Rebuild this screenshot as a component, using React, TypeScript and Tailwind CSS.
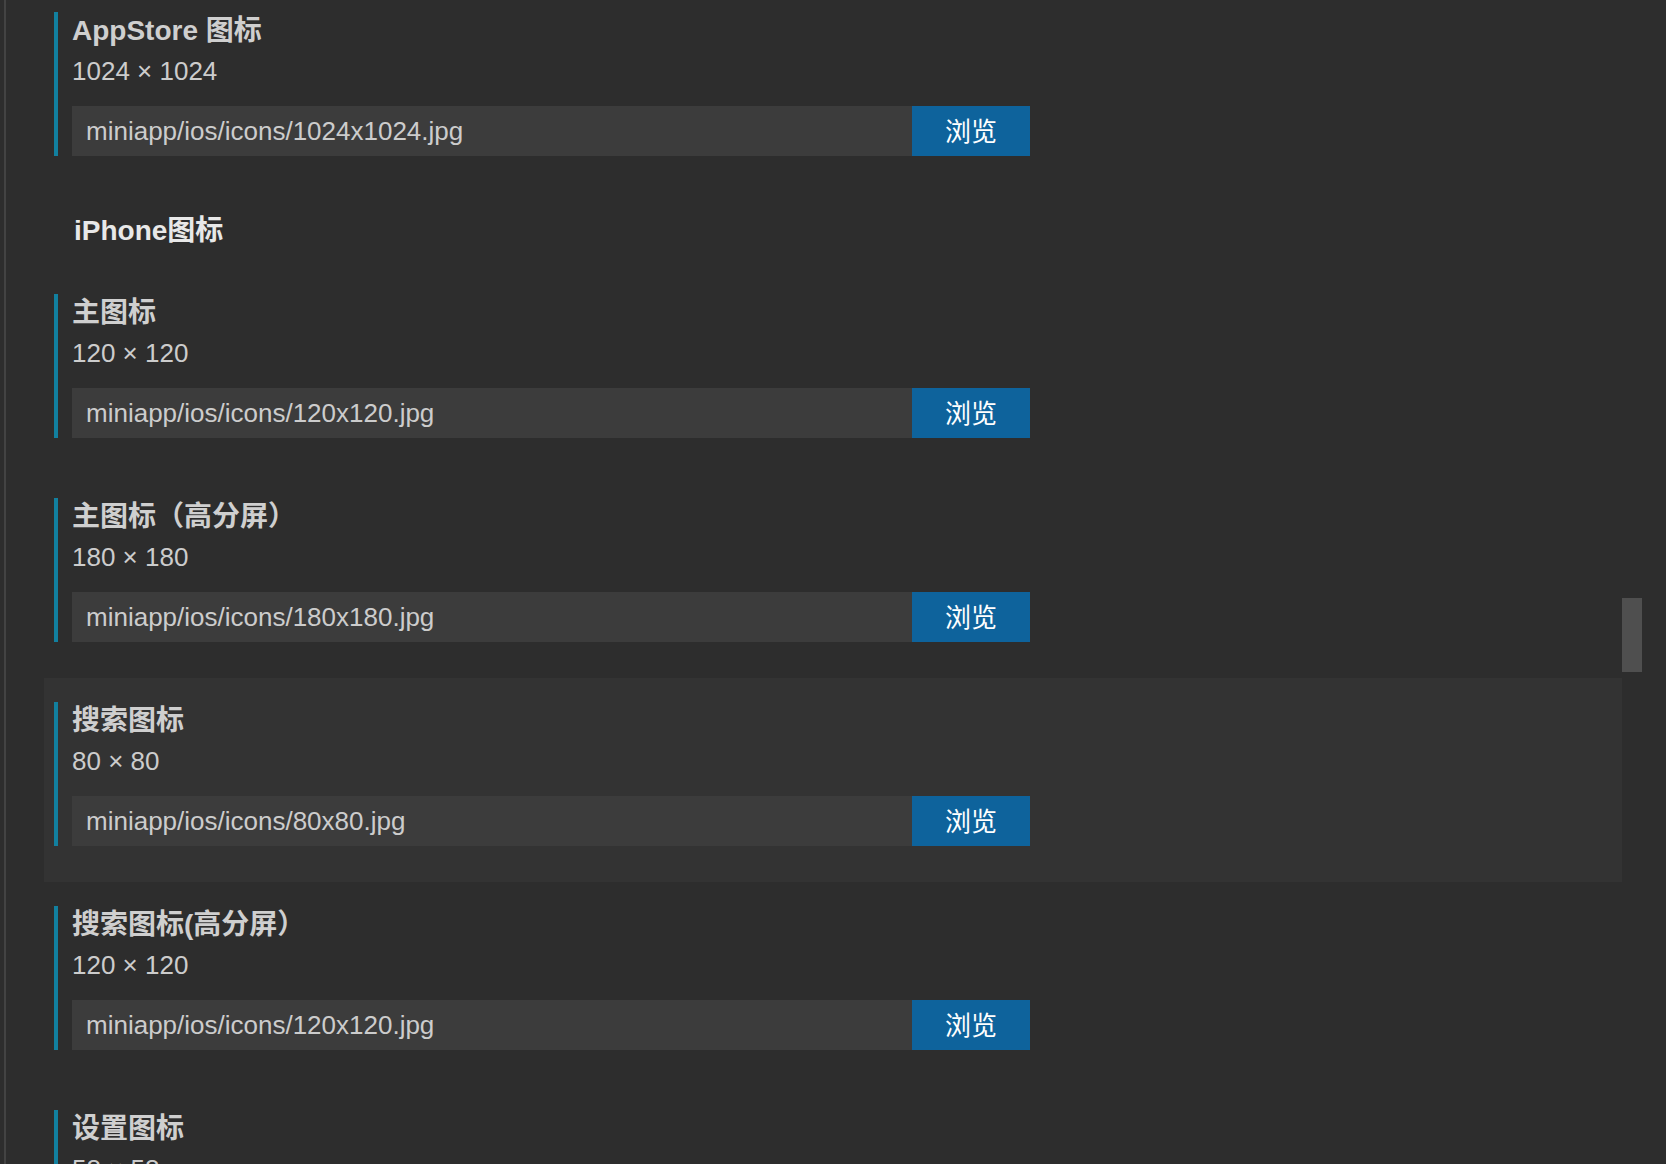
import React from "react";

type Item = { title: string; size: string; path: string; hover?: boolean };

const items1: Item[] = [
  { title: "AppStore 图标", size: "1024 × 1024", path: "miniapp/ios/icons/1024x1024.jpg" },
];

const items2: Item[] = [
  { title: "主图标", size: "120 × 120", path: "miniapp/ios/icons/120x120.jpg" },
  { title: "主图标（高分屏）", size: "180 × 180", path: "miniapp/ios/icons/180x180.jpg" },
  { title: "搜索图标", size: "80 × 80", path: "miniapp/ios/icons/80x80.jpg", hover: true },
  { title: "搜索图标(高分屏）", size: "120 × 120", path: "miniapp/ios/icons/120x120.jpg" },
  { title: "设置图标", size: "58 × 58", path: "miniapp/ios/icons/58x58.jpg" },
];

function Field({ item }: { item: Item }) {
  return (
    <div className={`pt-[24px] pb-[36px] pl-[10px] ${item.hover ? "bg-[#333333]" : ""}`}>
      <div className="flex">
        <div className="w-[4px] bg-[#12809f] shrink-0" />
        <div className="ml-[14px] flex flex-col">
          <div className="h-[36px] pt-[2px] leading-[34px] text-[28px] font-bold text-[#cfcfcf] whitespace-nowrap">
            {item.title}
          </div>
          <div className="mt-[6px] h-[34px] leading-[34px] text-[26px] text-[#cccccc] whitespace-nowrap">
            {item.size}
          </div>
          <div className="mt-[18px] flex h-[50px]">
            <div className="w-[840px] bg-[#3c3c3c] pl-[14px] leading-[50px] text-[26px] text-[#cccccc] whitespace-nowrap overflow-hidden">
              {item.path}
            </div>
            <div className="w-[118px] h-[50px] overflow-hidden bg-[#0e639c] text-white text-[26px] pt-[3px] leading-[47px] text-center">
              浏览
            </div>
          </div>
        </div>
      </div>
    </div>
  );
}

export default function App() {
  return (
    <div className="relative h-[1164px] w-[1666px] overflow-hidden bg-[#2d2d2d] flex font-['Liberation_Sans','Noto_Sans_CJK_SC',sans-serif]">
      <div className="w-[4px] shrink-0" />
      <div className="w-[2px] shrink-0 bg-[#434343]" />
      <div className="w-[38px] shrink-0" />
      <div className="w-[1578px] shrink-0 -mt-[12px] flex flex-col">
        {items1.map((it, i) => (
          <Field key={"a" + i} item={it} />
        ))}
        <div className="h-[78px] leading-[78px] pl-[30px] text-[28px] font-bold text-[#e8e8e8] whitespace-nowrap">
          iPhone图标
        </div>
        {items2.map((it, i) => (
          <Field key={"b" + i} item={it} />
        ))}
      </div>
      <div className="absolute left-[1622px] top-[598px] w-[20px] h-[74px] bg-[#4f4f4f]" />
    </div>
  );
}
